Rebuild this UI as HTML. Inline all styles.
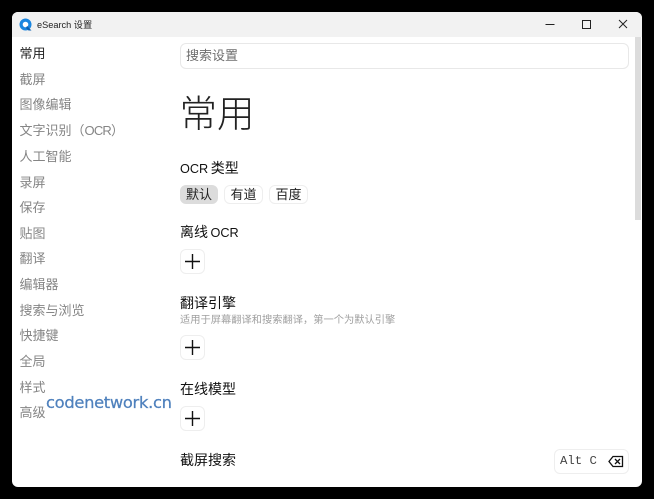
<!DOCTYPE html>
<html lang="zh"><head><meta charset="utf-8"><style>
html,body{margin:0;padding:0;width:654px;height:499px;background:#000;overflow:hidden}
*{box-sizing:border-box}
body{font-family:"Liberation Sans","Noto Sans CJK SC",sans-serif;position:relative}
#all{position:absolute;left:0;top:0;width:654px;height:499px;filter:blur(.3px)}
.a{position:absolute;white-space:nowrap}
#win{position:absolute;left:12px;top:12px;width:630px;height:475px;background:#fff;border-radius:6px;overflow:hidden}
#tb{position:absolute;left:12px;top:12px;width:630px;height:25px;background:#f2f2f2;border-radius:6px 6px 0 0}
.n{left:19.500px;font-size:13px;line-height:18px;color:#858585}
.h{left:180px;font-size:14px;line-height:20px;color:#111}
.h i{font-style:normal;font-size:12.700px;margin-right:2.500px}
.b{left:180px;width:25px;height:25px;border:1px solid #eee;border-radius:6px;background:#fff}
.t{top:185px;height:19px;border:1px solid #eee;border-radius:6px;font-size:13px;line-height:17px;text-align:center;color:#222}
</style></head><body><div id="all">
<div id="win"></div><div id="tb"></div>
<svg class="a" style="left:19px;top:18px" width="14" height="14" viewBox="0 0 14 14"><circle cx="6.500" cy="6.500" r="6" fill="#1a86e0"/><circle cx="6.500" cy="6.500" r="2.800" fill="#fff"/><path d="M8 8l4.500 4.500h-3L7 10z" fill="#0a5fb0"/></svg>
<div class="a" style="left:37px;top:17px;font-size:9.200px;line-height:16px;color:#222">eSearch 设置</div>
<svg class="a" style="left:540px;top:14px" width="100" height="20" fill="none" stroke="#222"><path d="M5.500 10.500h9M42.500 6.500h8v8h-8zM79 6l8 8M87 6l-8 8"/></svg>
<div class="a n" style="top:45px;color:#222">常用</div>
<div class="a n" style="top:71px">截屏</div>
<div class="a n" style="top:96px">图像编辑</div>
<div class="a n" style="top:122px">文字识别（<span style="letter-spacing:-.8px">OCR</span>）</div>
<div class="a n" style="top:148px">人工智能</div>
<div class="a n" style="top:174px">录屏</div>
<div class="a n" style="top:199px">保存</div>
<div class="a n" style="top:225px">贴图</div>
<div class="a n" style="top:250px">翻译</div>
<div class="a n" style="top:276px">编辑器</div>
<div class="a n" style="top:302px">搜索与浏览</div>
<div class="a n" style="top:327px">快捷键</div>
<div class="a n" style="top:353px">全局</div>
<div class="a n" style="top:379px">样式</div>
<div class="a n" style="top:404px">高级</div>
<div class="a" style="left:46px;top:391.500px;font-size:16.300px;line-height:22px;color:#4f81bd;font-family:'DejaVu Sans',sans-serif;letter-spacing:-.3px;-webkit-text-stroke:.25px #4f81bd">codenetwork.cn</div>
<div class="a" style="left:180px;top:43px;width:449px;height:26px;border:1px solid #e8e8e8;border-radius:6px;font-size:13px;line-height:24px;padding-left:5px;color:#6e6e6e">搜索设置</div>
<div class="a" style="left:635px;top:37px;width:6px;height:183px;background:#dcdcdc"></div>
<div class="a" style="left:179.500px;top:90px;font-size:37.500px;line-height:48px;font-weight:300;color:#222">常用</div>
<div class="a h" style="top:158px"><i>OCR</i>类型</div>
<div class="a t" style="left:180px;width:38px;background:#dcdcdc;border-color:#dcdcdc">默认</div>
<div class="a t" style="left:224px;width:39px">有道</div>
<div class="a t" style="left:269px;width:39px">百度</div>
<div class="a h" style="top:222px">离线<i style="margin:0 0 0 2.500px">OCR</i></div>
<div class="a b" style="top:249px"></div>
<div class="a h" style="top:293px">翻译引擎</div>
<div class="a" style="left:180px;top:314px;font-size:10.250px;line-height:14px;color:#a0a0a0">适用于屏幕翻译和搜索翻译，第一个为默认引擎</div>
<div class="a b" style="top:335px"></div>
<div class="a h" style="top:379px">在线模型</div>
<div class="a b" style="top:406px"></div>
<div class="a h" style="top:450px">截屏搜索</div>
<svg class="a" style="left:180px;top:249px" width="25" height="190" stroke="#111" stroke-width="1.400" fill="none"><path d="M12.500 5v15M5 12.500h15M12.500 91v15M5 98.500h15M12.500 162v15M5 169.500h15"/></svg>
<div class="a" style="left:554px;top:449px;width:75px;height:25px;border:1px solid #eee;border-radius:6px;background:#fff"></div>
<div class="a" style="left:560px;top:454px;font-family:'Liberation Mono',monospace;font-size:12.300px;line-height:15px;color:#444">Alt C</div>
<svg class="a" style="left:608px;top:455px" width="16" height="13" fill="none" stroke="#111" stroke-width="1.300"><path d="M5 1.500h9.500v10H5L1 6.500zM7 4l5 5M12 4l-5 5"/></svg>
</div></body></html>
